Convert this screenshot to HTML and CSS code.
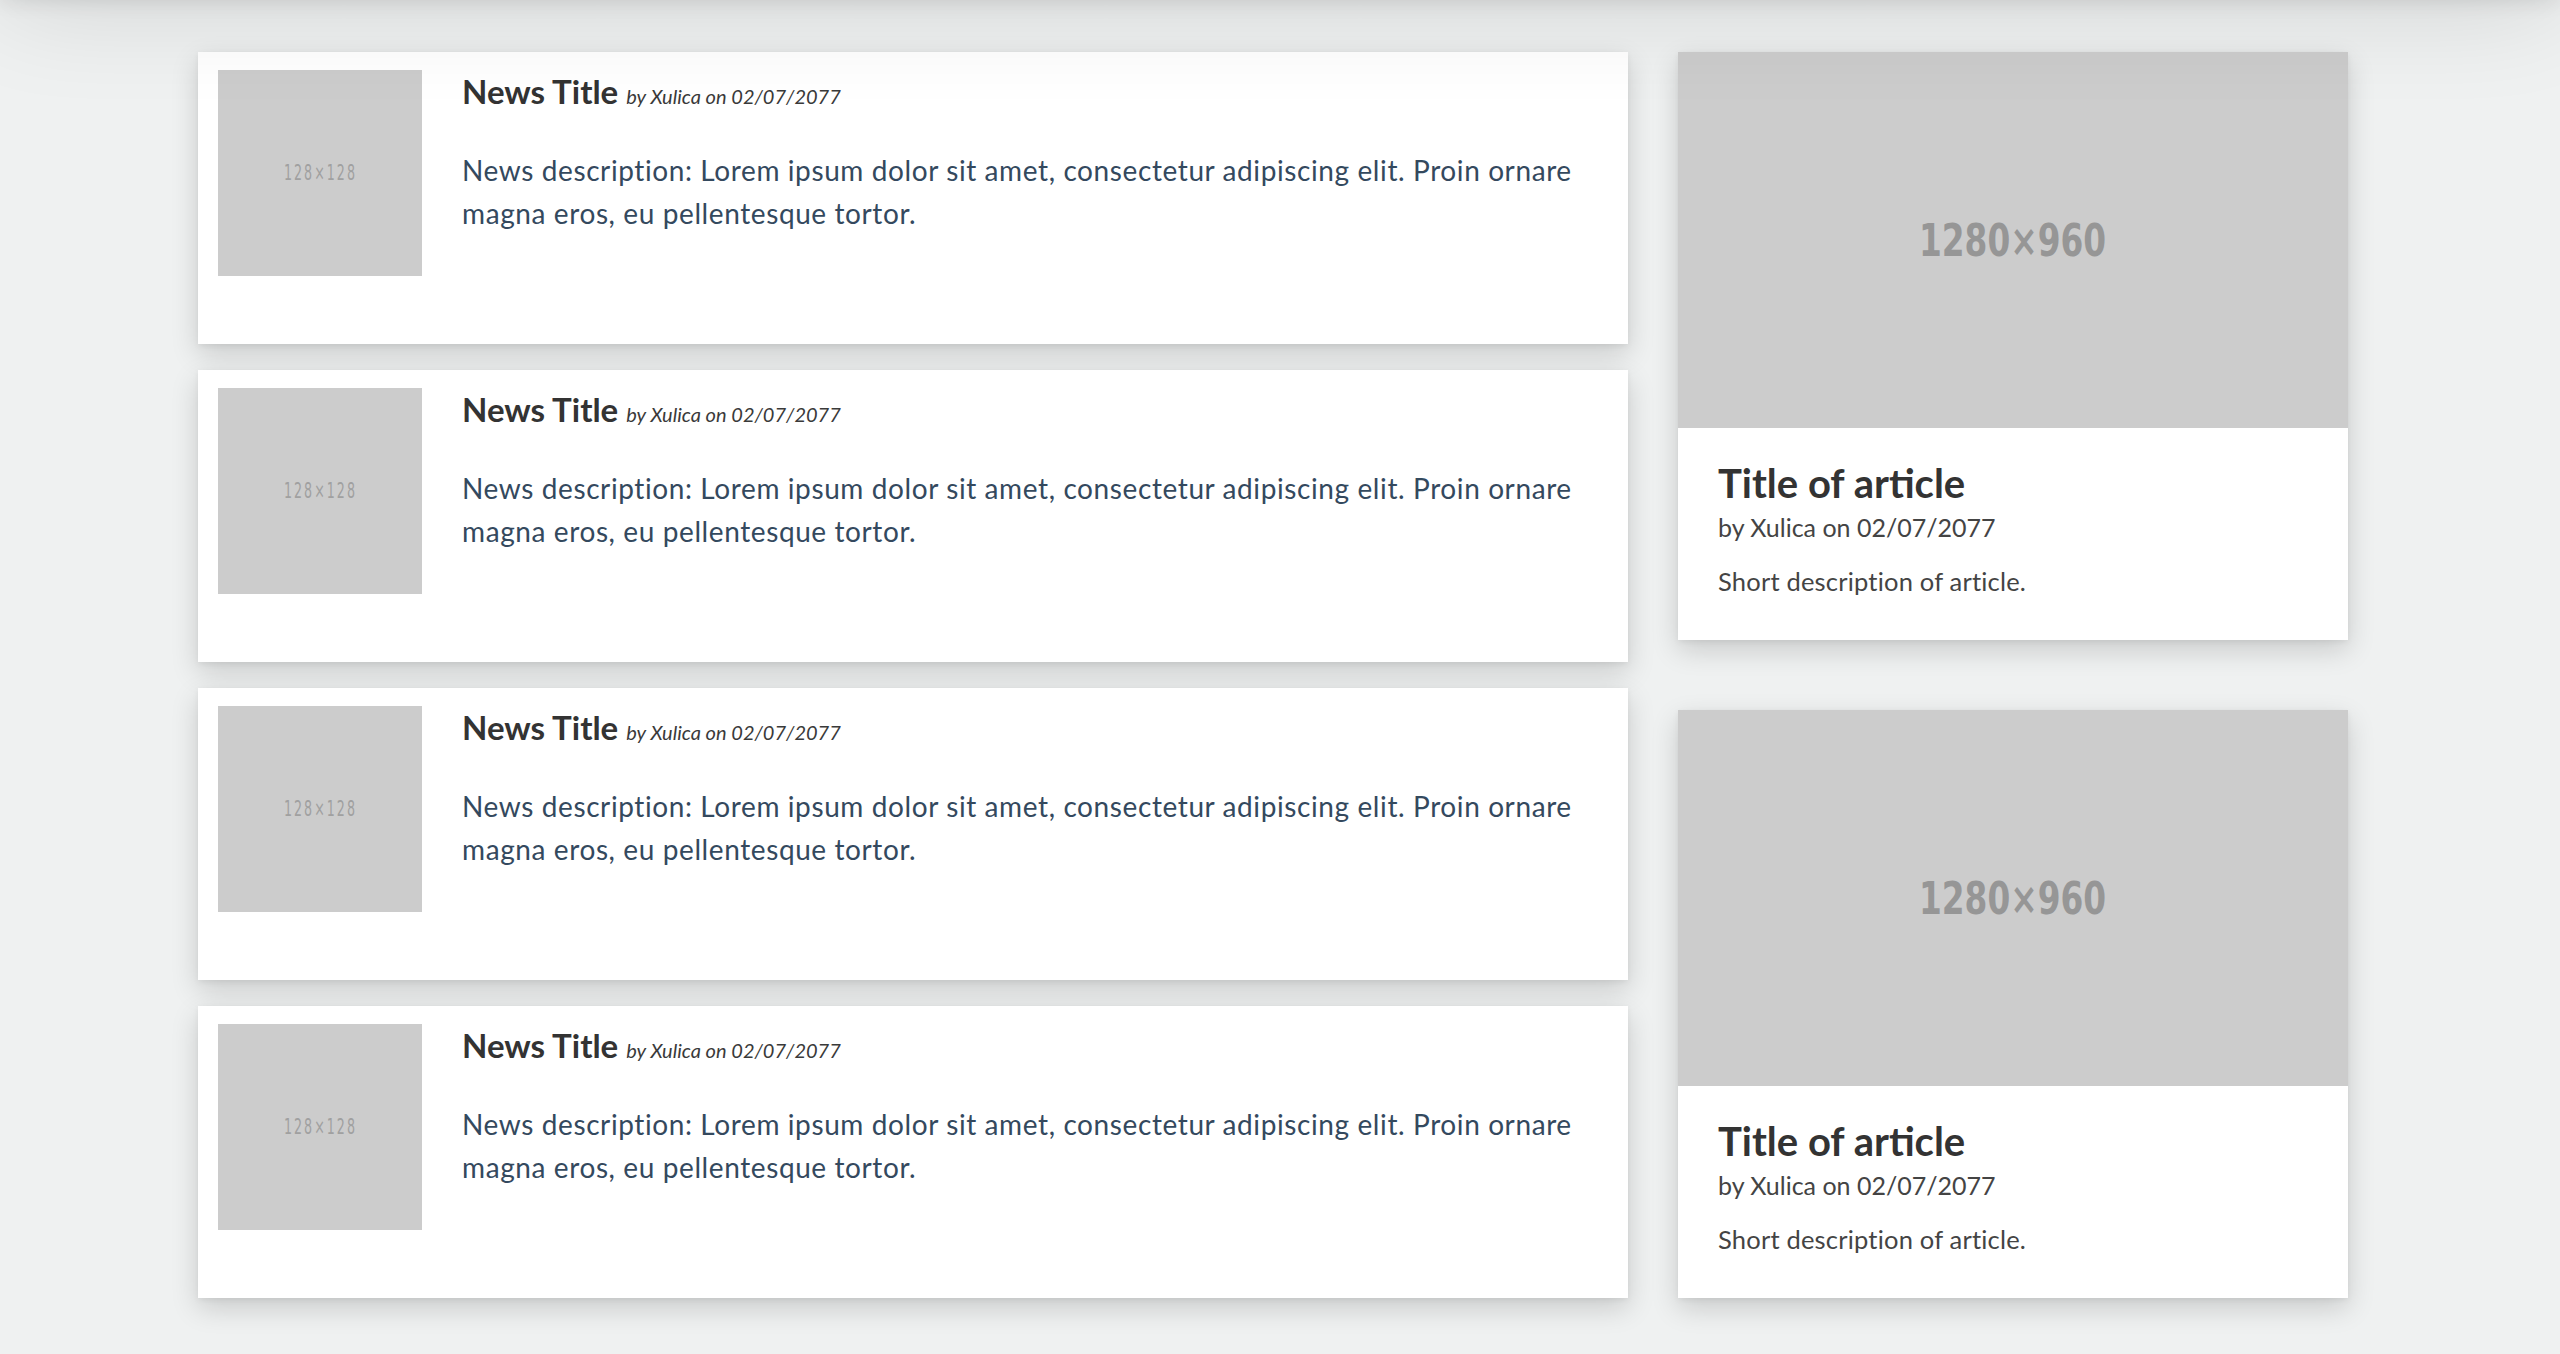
FILE: index.html
```html
<!DOCTYPE html>
<html lang="en">
<head>
<meta charset="utf-8">
<title>News</title>
<link rel="stylesheet" href="styles.css">
</head>
<body>
<div class="topbar"></div>
<main class="page">
  <section class="news-list">
    <article class="news-card">
      <div class="thumb"><span>128×128</span></div>
      <div class="news-body">
        <h2 class="news-title">News Title <small class="news-meta">by Xulica on 02/07/2077</small></h2>
        <p class="news-desc">News description: Lorem ipsum dolor sit amet, consectetur adipiscing elit. Proin ornare magna eros, eu pellentesque tortor.</p>
      </div>
    </article>
    <article class="news-card">
      <div class="thumb"><span>128×128</span></div>
      <div class="news-body">
        <h2 class="news-title">News Title <small class="news-meta">by Xulica on 02/07/2077</small></h2>
        <p class="news-desc">News description: Lorem ipsum dolor sit amet, consectetur adipiscing elit. Proin ornare magna eros, eu pellentesque tortor.</p>
      </div>
    </article>
    <article class="news-card">
      <div class="thumb"><span>128×128</span></div>
      <div class="news-body">
        <h2 class="news-title">News Title <small class="news-meta">by Xulica on 02/07/2077</small></h2>
        <p class="news-desc">News description: Lorem ipsum dolor sit amet, consectetur adipiscing elit. Proin ornare magna eros, eu pellentesque tortor.</p>
      </div>
    </article>
    <article class="news-card">
      <div class="thumb"><span>128×128</span></div>
      <div class="news-body">
        <h2 class="news-title">News Title <small class="news-meta">by Xulica on 02/07/2077</small></h2>
        <p class="news-desc">News description: Lorem ipsum dolor sit amet, consectetur adipiscing elit. Proin ornare magna eros, eu pellentesque tortor.</p>
      </div>
    </article>
  </section>
  <aside class="articles">
    <article class="article-card">
      <div class="cover"><span>1280×960</span></div>
      <div class="article-body">
        <h3 class="article-title">Title of article</h3>
        <p class="article-meta">by Xulica on 02/07/2077</p>
        <p class="article-desc">Short description of article.</p>
      </div>
    </article>
    <article class="article-card">
      <div class="cover"><span>1280×960</span></div>
      <div class="article-body">
        <h3 class="article-title">Title of article</h3>
        <p class="article-meta">by Xulica on 02/07/2077</p>
        <p class="article-desc">Short description of article.</p>
      </div>
    </article>
  </aside>
</main>
</body>
</html>
```
FILE: styles.css
```css
html, body {
  margin: 0;
  padding: 0;
}
body {
  background: #eff1f1;
  font-family: Lato, "Noto Sans", sans-serif;
  color: #333;
  height: 1354px;
  overflow: hidden;
}
.topbar {
  position: fixed;
  top: -100px;
  left: 0;
  right: 0;
  height: 100px;
  z-index: 10;
  box-shadow: 0 0 24px rgba(0, 0, 0, 0.12), 0 0 110px rgba(0, 0, 0, 0.14);
}
.page {
  display: flex;
  align-items: stretch;
  gap: 50px;
  padding: 52px 0 56px 198px;
}
.news-list {
  width: 1430px;
  display: flex;
  flex-direction: column;
  gap: 26px;
}
.news-card {
  background: #fff;
  display: flex;
  align-items: flex-start;
  padding: 18px 20px 68px;
  box-shadow: 0 10px 26px rgba(0, 0, 0, 0.16), 0 2px 6px rgba(0, 0, 0, 0.06);
}
.thumb {
  flex: 0 0 204px;
  height: 206px;
  background: #cccccc;
  display: flex;
  align-items: center;
  justify-content: center;
}
.thumb span {
  display: inline-block;
  font-family: "DejaVu Sans Condensed", "DejaVu Sans", sans-serif;
  font-stretch: condensed;
  font-size: 21px;
  letter-spacing: 3px;
  color: #a0a0a0;
  transform: scaleX(0.67);
}
.news-body {
  margin-left: 40px;
  flex: 1;
  min-width: 0;
}
.news-title {
  margin: 0;
  padding-top: 1px;
  font-size: 33px;
  font-weight: 700;
  line-height: 40px;
  color: #333;
}
.news-meta {
  font-size: 20px;
  font-weight: 400;
  font-style: italic;
  color: #3a3a3a;
}
.news-desc {
  margin: 33px 0 0;
  font-size: 28px;
  letter-spacing: 0.6px;
  line-height: 42.7px;
  color: #34495e;
}
.articles {
  width: 670px;
  display: flex;
  flex-direction: column;
  justify-content: space-between;
}
.article-card {
  background: #fff;
  box-shadow: 0 10px 26px rgba(0, 0, 0, 0.16), 0 2px 6px rgba(0, 0, 0, 0.06);
}
.cover {
  height: 376px;
  background: #cccccc;
  display: flex;
  align-items: center;
  justify-content: center;
}
.cover span {
  display: inline-block;
  font-family: "DejaVu Sans Condensed", "DejaVu Sans", sans-serif;
  font-stretch: condensed;
  font-weight: 700;
  font-size: 45px;
  color: #969696;
  transform: scaleX(0.81);
}
.article-body {
  padding: 31px 40px 44px;
}
.article-title {
  margin: 0;
  font-size: 40px;
  font-weight: 700;
  line-height: 48px;
  color: #333;
}
.article-meta {
  margin: 6px 0 0;
  font-size: 25px;
  line-height: 29px;
  color: #444;
}
.article-desc {
  margin: 25px 0 0;
  font-size: 25.5px;
  letter-spacing: 0.2px;
  line-height: 29px;
  color: #444;
}
```
